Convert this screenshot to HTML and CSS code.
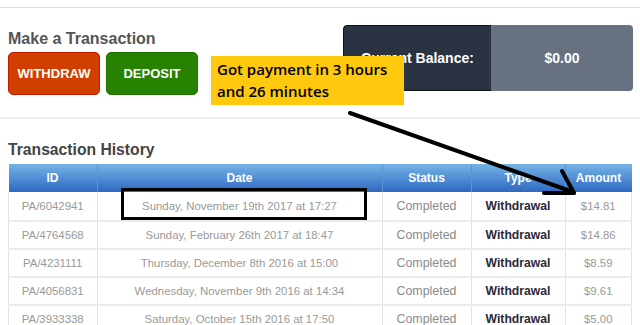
FILE: index.html
```html
<!DOCTYPE html>
<html lang="en">
<head>
    <meta charset="UTF-8">
    <meta name="viewport" content="width=device-width, initial-scale=1.0">
    <title>Transactions</title>
    <link rel="stylesheet" href="styles.css">
</head>
<body>
    <div class="top-line"></div>

    <div class="page">
        <div class="transaction-row">
            <div class="make-transaction">
                <h2>Make a Transaction</h2>
                <div class="buttons">
                    <button class="btn btn-withdraw">WITHDRAW</button>
                    <button class="btn btn-deposit">DEPOSIT</button>
                </div>
            </div>
            <div class="balance">
                <div class="balance-label">Current Balance:</div>
                <div class="balance-value">$0.00</div>
            </div>
        </div>
    </div>

    <div class="divider"></div>

    <div class="page">
        <h2 class="history-title">Transaction History</h2>
        <table class="history">
            <thead>
                <tr>
                    <th class="col-id">ID</th>
                    <th class="col-date">Date</th>
                    <th class="col-status">Status</th>
                    <th class="col-type">Type</th>
                    <th class="col-amount">Amount</th>
                </tr>
            </thead>
            <tbody>
                <tr>
                    <td>PA/6042941</td>
                    <td>Sunday, November 19th 2017 at 17:27</td>
                    <td class="status">Completed</td>
                    <td class="type">Withdrawal</td>
                    <td>$14.81</td>
                </tr>
                <tr>
                    <td>PA/4764568</td>
                    <td>Sunday, February 26th 2017 at 18:47</td>
                    <td class="status">Completed</td>
                    <td class="type">Withdrawal</td>
                    <td>$14.86</td>
                </tr>
                <tr>
                    <td>PA/4231111</td>
                    <td>Thursday, December 8th 2016 at 15:00</td>
                    <td class="status">Completed</td>
                    <td class="type">Withdrawal</td>
                    <td>$8.59</td>
                </tr>
                <tr>
                    <td>PA/4056831</td>
                    <td>Wednesday, November 9th 2016 at 14:34</td>
                    <td class="status">Completed</td>
                    <td class="type">Withdrawal</td>
                    <td>$9.61</td>
                </tr>
                <tr>
                    <td>PA/3933338</td>
                    <td>Saturday, October 15th 2016 at 17:50</td>
                    <td class="status">Completed</td>
                    <td class="type">Withdrawal</td>
                    <td>$5.00</td>
                </tr>
            </tbody>
        </table>
    </div>

    <!-- Annotations drawn over the screenshot -->
    <div class="note">Got payment in 3 hours<br>and 26 minutes</div>
    <div class="highlight-box"></div>
    <svg class="arrow" width="640" height="325" viewBox="0 0 640 325">
        <g stroke="#000" stroke-width="4" stroke-linecap="round" fill="none">
            <line x1="350" y1="113" x2="573" y2="192"/>
            <line x1="562" y1="171" x2="574" y2="193"/>
            <line x1="544" y1="193" x2="574" y2="193"/>
        </g>
    </svg>
</body>
</html>
```

FILE: styles.css
```css
/* Base styles */
body {
    font-family: 'Liberation Sans', Arial, sans-serif;
    background-color: #fff;
    margin: 0;
    position: relative;
    width: 640px;
    height: 325px;
    overflow: hidden;
}

.top-line {
    margin-top: 7px;
    height: 1px;
    background-color: #dedede;
}

.page {
    padding: 0 7px 0 8px;
}

h2 {
    margin: 0;
    font-weight: bold;
}

/* Make a transaction + balance */
.transaction-row {
    display: flex;
    justify-content: space-between;
    align-items: flex-start;
    height: 109px;
}

.make-transaction {
    padding-top: 21px;
}

.make-transaction h2 {
    font-size: 16px;
    color: #555;
    line-height: 20px;
}

.buttons {
    display: flex;
    gap: 6px;
    margin-top: 3px;
}

.btn {
    width: 92px;
    height: 43px;
    border-radius: 5px;
    color: #fff;
    font-family: 'Liberation Sans', Arial, sans-serif;
    font-size: 13px;
    font-weight: bold;
    cursor: pointer;
    padding: 0;
}

.btn-withdraw {
    background-color: #d03f00;
    border: 1px solid #c41a00;
}

.btn-deposit {
    background-color: #268200;
    border: 1px solid #1f7200;
}

.balance {
    margin-top: 17px;
    width: 290px;
    height: 66px;
    display: flex;
    border-radius: 4px;
    overflow: hidden;
    color: #fff;
    font-weight: bold;
    font-size: 14px;
}

.balance-label,
.balance-value {
    display: flex;
    align-items: center;
    justify-content: center;
}

.balance-label {
    width: 147px;
    background-color: #2b3343;
    border: 1px solid #111;
    border-right: none;
    border-radius: 4px 0 0 4px;
}

.balance-value {
    flex: 1;
    background-color: #687180;
}

.divider {
    height: 2px;
    background-color: #efefef;
}

/* Transaction history */
.history-title {
    font-size: 15.7px;
    color: #444;
    padding-top: 21px;
    line-height: 20px;
    margin-bottom: 4px;
}

.history {
    width: 619px;
    border-collapse: collapse;
    font-size: 11.4px;
    table-layout: fixed;
}

.history th {
    height: 28px;
    padding: 0;
    color: #fff;
    font-size: 12px;
    font-weight: bold;
    background: linear-gradient(#74b4e6, #2f68c2);
    border-left: 1px solid #5b95d6;
}

.history th:first-child {
    border-left: none;
}

.col-id { width: 88px; }
.col-date { width: 284px; }
.col-status { width: 88px; }
.col-type { width: 93px; }
.col-amount { width: 66px; }

.history td {
    height: 26px;
    padding: 0;
    text-align: center;
    color: #999;
    border: 1px solid #e2e2e2;
    border-top: 2px solid #ececec;
}

.history tbody tr:first-child td {
    border-top: none;
    height: 28px;
}

.history td.status {
    color: #8a8a8a;
    font-size: 12.4px;
}

.history td.type {
    color: #2d2838;
    font-weight: bold;
    font-size: 12.2px;
}

/* Annotations */
.note {
    position: absolute;
    left: 211px;
    top: 56px;
    width: 187px;
    height: 45px;
    padding: 2px 0 2px 6px;
    background-color: #ffc90e;
    font-family: 'Open Sans', 'Noto Sans', sans-serif;
    font-weight: 600;
    font-size: 15px;
    line-height: 22px;
    color: #000;
}

.highlight-box {
    position: absolute;
    left: 121px;
    top: 188px;
    width: 240px;
    height: 26px;
    border: 3px solid #000;
}

.arrow {
    position: absolute;
    left: 0;
    top: 0;
}
```
